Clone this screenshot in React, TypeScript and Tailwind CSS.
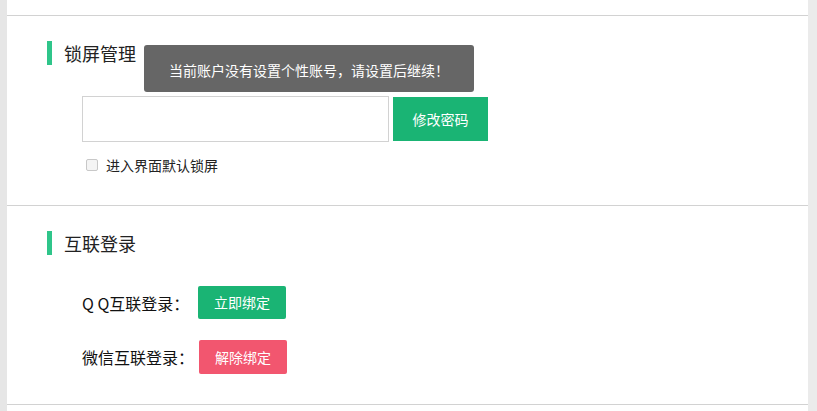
import React from "react";

const cjk = { fontFamily: '"Noto Sans CJK SC", "Noto Sans", sans-serif' };

function SectionTitle({ title }: { title: string }) {
  return (
    <div className="flex items-center pl-[40px]">
      <span className="w-[5px] h-[24px] bg-[#2fc58a]" />
      <span className="ml-[12px] text-[18px] leading-[24px] text-[#222]">{title}</span>
    </div>
  );
}

export default function App() {
  return (
    <div className="flex w-[817px] h-[411px] overflow-hidden bg-white" style={cjk}>
      <div className="w-[7px] bg-[#e6e6e6]" />
      <div className="flex-1 relative flex flex-col">
        <div className="h-[16px] border-b border-[#d2d2d2]" />

        {/* 锁屏管理 */}
        <div className="h-[190px] border-b border-[#d2d2d2] pt-[25px]">
          <SectionTitle title="锁屏管理" />
          <div className="flex items-start ml-[75px] mt-[31px]">
            <input className="w-[307px] h-[46px] border border-[#d2d2d2] outline-none px-2" />
            <button className="ml-[4px] mt-[1px] w-[95px] h-[44px] bg-[#1ab474] text-white text-[14px]">
              修改密码
            </button>
          </div>
          <label className="flex items-center ml-[79px] mt-[13px] text-[14px] leading-[20px] text-[#222]">
            <span className="w-[12px] h-[12px] rounded-[2px] border border-[#c8c8c8] bg-[#f4f4f4]" />
            <span className="ml-[8px]">进入界面默认锁屏</span>
          </label>
        </div>

        {/* 互联登录 */}
        <div className="h-[199px] border-b border-[#d2d2d2] pt-[25px]">
          <SectionTitle title="互联登录" />
          <div className="flex flex-col gap-[21px] ml-[75px] mt-[31px]">
            <div className="flex items-center">
              <span className="w-[116px] text-[16px] text-[#111]">Q Q互联登录：</span>
              <button className="w-[88px] h-[33px] rounded-[2px] bg-[#1ab474] text-white text-[14px]">
                立即绑定
              </button>
            </div>
            <div className="flex items-center">
              <span className="w-[117px] text-[16px] text-[#111]">微信互联登录：</span>
              <button className="w-[88px] h-[34px] rounded-[2px] bg-[#f2566f] text-white text-[14px]">
                解除绑定
              </button>
            </div>
          </div>
        </div>

        {/* tooltip */}
        <div className="absolute left-[137px] top-[45px] w-[330px] h-[47px] rounded-[3px] bg-[#666] text-white text-[14px] flex items-center justify-center pt-[4px]">
          当前账户没有设置个性账号，请设置后继续！
        </div>
      </div>
      <div className="w-[9px] bg-[#ebebeb]" />
    </div>
  );
}
